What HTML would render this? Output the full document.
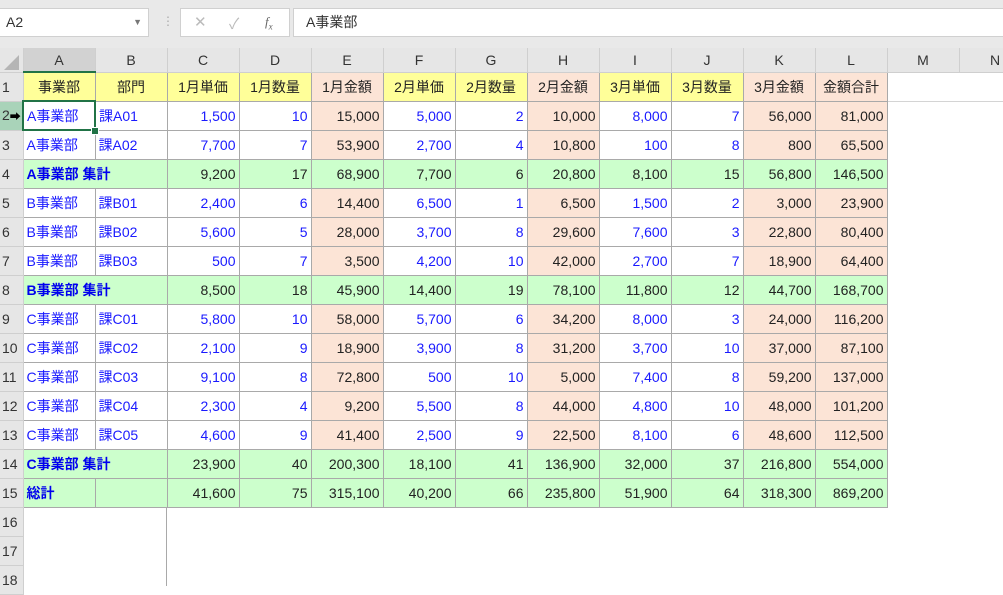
<!DOCTYPE html>
<html><head><meta charset="utf-8"><style>
body{margin:0;width:1003px;height:586px;overflow:hidden;background:#fff;font-family:"Liberation Sans","Noto Sans CJK JP",sans-serif;position:relative}
.top{position:absolute;left:0;top:0;width:1003px;height:48px;background:#e9e9e9}
.nb{position:absolute;left:0;top:8px;width:149px;height:29px;background:#fff;border:1px solid #d0d0d0;border-left:none;box-sizing:border-box;font-size:14px;line-height:27px;padding-left:6px;color:#333}
.fx{position:absolute;left:180px;top:8px;width:110px;height:29px;background:#fff;border:1px solid #d0d0d0;box-sizing:border-box;color:#bbb;font-size:15px}
.fb{position:absolute;left:293px;top:8px;width:710px;height:29px;background:#fff;border:1px solid #d0d0d0;border-right:none;box-sizing:border-box;font-size:14px;line-height:27px;padding-left:12px;color:#333}
table{position:absolute;left:0;top:48px;width:1031px;border-collapse:collapse;table-layout:fixed;font-size:14px}
td{height:29px;padding:0 3px;border:1px solid #a9a9a9;white-space:nowrap;overflow:hidden;text-align:right;color:#1a1aff;box-sizing:border-box}
tr.h td{height:24px;background:#e6e6e6;color:#333;text-align:center;border:1px solid #cfcfcf;border-top:none;font-size:14px}
td.r{background:#e6e6e6;color:#333;text-align:left;padding-left:2px;border:1px solid #cfcfcf;border-left:none}
td.y{background:#ffff99;color:#222;text-align:center}
td.hs{background:#fce4d6;color:#222;text-align:center}
td.s{background:#fce4d6;color:#222}
td.g{background:#ccffcc;color:#222}
td.gl{background:#ccffcc;color:#0000ee;font-weight:bold;text-align:left}
td.l{text-align:left}
td.e{border:none}
.tri{position:absolute;left:4px;top:55px;width:0;height:0;border-left:15px solid transparent;border-bottom:15px solid #b5b5b5}
</style></head><body>
<div class="top"></div>
<div class="nb">A2<span style="position:absolute;right:6px;top:0;font-size:9px;color:#777">▼</span></div>
<div style="position:absolute;left:162px;top:14px;color:#aaa;font-size:12px">⋮</div>
<div class="fx"><span style="position:absolute;left:13px;top:4px">✕</span><span style="position:absolute;left:48px;top:4px">✓</span><span style="position:absolute;left:84px;top:5px;color:#666;font-style:italic;font-family:'Liberation Serif',serif;font-size:13px">f<sub style="font-size:9px">x</sub></span></div>
<div class="fb">A事業部</div>
<table>
<colgroup><col style="width:23px"><col style="width:72px"><col style="width:72px"><col style="width:72px"><col style="width:72px"><col style="width:72px"><col style="width:72px"><col style="width:72px"><col style="width:72px"><col style="width:72px"><col style="width:72px"><col style="width:72px"><col style="width:72px"><col style="width:72px"><col style="width:72px"></colgroup>
<tr class="h"><td style="border-left:none"></td><td style="background:#d2d2d2;border-bottom:2px solid #217346">A</td><td>B</td><td>C</td><td>D</td><td>E</td><td>F</td><td>G</td><td>H</td><td>I</td><td>J</td><td>K</td><td>L</td><td>M</td><td>N</td></tr>
<tr><td class="r">1</td><td class="y">事業部</td><td class="y">部門</td><td class="y">1月単価</td><td class="y">1月数量</td><td class="hs">1月金額</td><td class="y">2月単価</td><td class="y">2月数量</td><td class="hs">2月金額</td><td class="y">3月単価</td><td class="y">3月数量</td><td class="hs">3月金額</td><td class="hs">金額合計</td><td class="e" style="border-bottom:1px solid #d4d4d4"></td><td class="e" style="border-bottom:1px solid #d4d4d4"></td></tr>
<tr><td class="r" style="background:#a9d3b9">2<span style="color:#000;font-size:11px">➡</span></td><td class="l" style="border:2px solid #217346">A事業部</td><td class="l">課A01</td><td>1,500</td><td>10</td><td class="s">15,000</td><td>5,000</td><td>2</td><td class="s">10,000</td><td>8,000</td><td>7</td><td class="s">56,000</td><td class="s">81,000</td><td class="e"></td><td class="e"></td></tr>
<tr><td class="r">3</td><td class="l">A事業部</td><td class="l">課A02</td><td>7,700</td><td>7</td><td class="s">53,900</td><td>2,700</td><td>4</td><td class="s">10,800</td><td>100</td><td>8</td><td class="s">800</td><td class="s">65,500</td><td class="e"></td><td class="e"></td></tr>
<tr><td class="r">4</td><td class="gl" colspan="2">A事業部 集計</td><td class="g">9,200</td><td class="g">17</td><td class="g">68,900</td><td class="g">7,700</td><td class="g">6</td><td class="g">20,800</td><td class="g">8,100</td><td class="g">15</td><td class="g">56,800</td><td class="g">146,500</td><td class="e"></td><td class="e"></td></tr>
<tr><td class="r">5</td><td class="l">B事業部</td><td class="l">課B01</td><td>2,400</td><td>6</td><td class="s">14,400</td><td>6,500</td><td>1</td><td class="s">6,500</td><td>1,500</td><td>2</td><td class="s">3,000</td><td class="s">23,900</td><td class="e"></td><td class="e"></td></tr>
<tr><td class="r">6</td><td class="l">B事業部</td><td class="l">課B02</td><td>5,600</td><td>5</td><td class="s">28,000</td><td>3,700</td><td>8</td><td class="s">29,600</td><td>7,600</td><td>3</td><td class="s">22,800</td><td class="s">80,400</td><td class="e"></td><td class="e"></td></tr>
<tr><td class="r">7</td><td class="l">B事業部</td><td class="l">課B03</td><td>500</td><td>7</td><td class="s">3,500</td><td>4,200</td><td>10</td><td class="s">42,000</td><td>2,700</td><td>7</td><td class="s">18,900</td><td class="s">64,400</td><td class="e"></td><td class="e"></td></tr>
<tr><td class="r">8</td><td class="gl" colspan="2">B事業部 集計</td><td class="g">8,500</td><td class="g">18</td><td class="g">45,900</td><td class="g">14,400</td><td class="g">19</td><td class="g">78,100</td><td class="g">11,800</td><td class="g">12</td><td class="g">44,700</td><td class="g">168,700</td><td class="e"></td><td class="e"></td></tr>
<tr><td class="r">9</td><td class="l">C事業部</td><td class="l">課C01</td><td>5,800</td><td>10</td><td class="s">58,000</td><td>5,700</td><td>6</td><td class="s">34,200</td><td>8,000</td><td>3</td><td class="s">24,000</td><td class="s">116,200</td><td class="e"></td><td class="e"></td></tr>
<tr><td class="r">10</td><td class="l">C事業部</td><td class="l">課C02</td><td>2,100</td><td>9</td><td class="s">18,900</td><td>3,900</td><td>8</td><td class="s">31,200</td><td>3,700</td><td>10</td><td class="s">37,000</td><td class="s">87,100</td><td class="e"></td><td class="e"></td></tr>
<tr><td class="r">11</td><td class="l">C事業部</td><td class="l">課C03</td><td>9,100</td><td>8</td><td class="s">72,800</td><td>500</td><td>10</td><td class="s">5,000</td><td>7,400</td><td>8</td><td class="s">59,200</td><td class="s">137,000</td><td class="e"></td><td class="e"></td></tr>
<tr><td class="r">12</td><td class="l">C事業部</td><td class="l">課C04</td><td>2,300</td><td>4</td><td class="s">9,200</td><td>5,500</td><td>8</td><td class="s">44,000</td><td>4,800</td><td>10</td><td class="s">48,000</td><td class="s">101,200</td><td class="e"></td><td class="e"></td></tr>
<tr><td class="r">13</td><td class="l">C事業部</td><td class="l">課C05</td><td>4,600</td><td>9</td><td class="s">41,400</td><td>2,500</td><td>9</td><td class="s">22,500</td><td>8,100</td><td>6</td><td class="s">48,600</td><td class="s">112,500</td><td class="e"></td><td class="e"></td></tr>
<tr><td class="r">14</td><td class="gl" colspan="2">C事業部 集計</td><td class="g">23,900</td><td class="g">40</td><td class="g">200,300</td><td class="g">18,100</td><td class="g">41</td><td class="g">136,900</td><td class="g">32,000</td><td class="g">37</td><td class="g">216,800</td><td class="g">554,000</td><td class="e"></td><td class="e"></td></tr>
<tr><td class="r">15</td><td class="gl">総計</td><td class="g"></td><td class="g">41,600</td><td class="g">75</td><td class="g">315,100</td><td class="g">40,200</td><td class="g">66</td><td class="g">235,800</td><td class="g">51,900</td><td class="g">64</td><td class="g">318,300</td><td class="g">869,200</td><td class="e"></td><td class="e"></td></tr>
<tr><td class="r">16</td><td class="e" colspan="14"></td></tr>
<tr><td class="r">17</td><td class="e" colspan="14"></td></tr>
<tr><td class="r">18</td><td class="e" colspan="14"></td></tr>
</table>
<div class="tri"></div>
<div style="position:absolute;left:166px;top:507px;width:1px;height:79px;background:#a9a9a9"></div>
<div style="position:absolute;left:91px;top:127px;width:6px;height:6px;background:#217346;border:1px solid #fff"></div>
</body></html>
